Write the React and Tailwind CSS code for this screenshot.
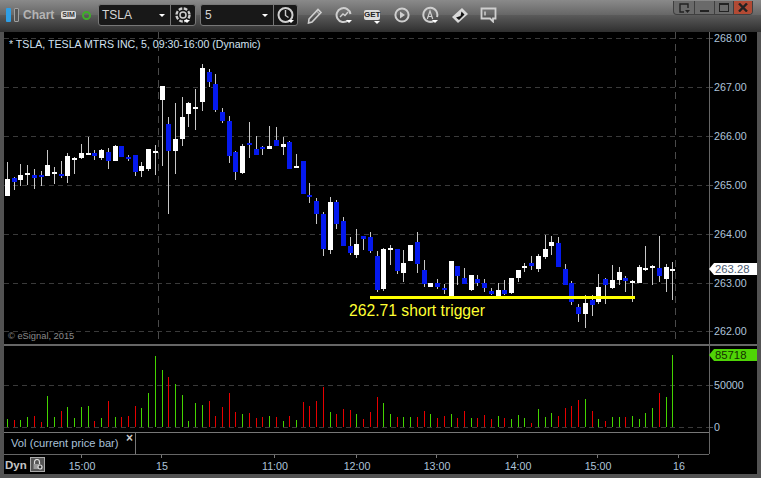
import React from 'react';

// [wickTop, wickBottom, bodyTop, bodyBottom, isBlue]
const candles = [
  [162, 196, 179, 196, 0], [177, 190, 178, 182, 1], [164, 186, 175, 180, 0], [165, 185, 173, 175, 0],
  [169, 189, 175, 178, 1], [171, 186, 175, 177, 1], [150, 176, 165, 176, 0], [167, 184, 172, 174, 0],
  [161, 178, 174, 176, 1], [153, 183, 156, 176, 0], [157, 174, 158, 160, 0], [144, 159, 153, 158, 0],
  [137, 155, 153, 155, 0], [150, 160, 153, 156, 1], [149, 160, 150, 158, 0], [148, 169, 152, 161, 1],
  [145, 161, 146, 161, 0], [146, 157, 146, 157, 1], [155, 161, 157, 159, 1], [155, 176, 155, 172, 1],
  [162, 177, 166, 171, 0], [149, 171, 149, 169, 0], [145, 175, 151, 153, 0], [86, 166, 86, 100, 0],
  [117, 214, 124, 151, 1], [103, 174, 139, 151, 0], [97, 146, 117, 139, 0], [102, 127, 103, 114, 0],
  [89, 130, 107, 109, 0], [64, 111, 68, 102, 0], [69, 87, 72, 82, 1], [74, 112, 84, 110, 1],
  [108, 123, 112, 121, 1], [116, 163, 121, 156, 1], [151, 180, 152, 172, 1], [144, 174, 146, 173, 0],
  [122, 158, 143, 145, 1], [136, 155, 149, 155, 1], [146, 155, 147, 149, 1], [126, 149, 146, 149, 0],
  [127, 146, 140, 146, 1], [137, 155, 144, 147, 0], [141, 169, 142, 169, 1], [154, 168, 166, 168, 0],
  [161, 194, 161, 194, 1], [183, 203, 195, 197, 1], [198, 224, 201, 214, 1], [212, 256, 214, 249, 1],
  [197, 254, 202, 250, 0], [200, 229, 202, 224, 1], [217, 246, 221, 246, 1], [237, 255, 246, 253, 1],
  [229, 258, 244, 255, 0], [236, 250, 236, 239, 1], [232, 253, 237, 251, 1], [251, 292, 256, 290, 1],
  [248, 291, 249, 289, 0], [245, 265, 248, 250, 0], [249, 274, 249, 271, 1], [250, 282, 263, 273, 0],
  [245, 261, 245, 261, 0], [232, 273, 242, 264, 1], [260, 287, 270, 284, 1], [283, 287, 283, 287, 0],
  [279, 289, 283, 287, 1], [284, 294, 288, 290, 1], [261, 298, 261, 297, 0], [266, 285, 266, 276, 1],
  [268, 284, 278, 284, 1], [275, 291, 275, 290, 0], [275, 286, 279, 283, 1], [279, 292, 283, 288, 1],
  [288, 295, 291, 294, 1], [283, 297, 290, 296, 0], [280, 295, 290, 294, 1], [278, 294, 278, 293, 0],
  [270, 282, 270, 278, 0], [263, 272, 266, 268, 0], [256, 270, 263, 266, 1], [254, 272, 256, 269, 0],
  [235, 259, 249, 257, 0], [236, 255, 242, 246, 0], [237, 267, 243, 267, 1], [264, 285, 269, 285, 1],
  [281, 305, 283, 302, 1], [304, 322, 307, 314, 1], [295, 328, 303, 314, 0], [295, 316, 300, 305, 1],
  [274, 304, 287, 302, 0], [278, 304, 279, 285, 1], [265, 289, 280, 288, 0], [267, 285, 272, 280, 0],
  [276, 292, 278, 281, 1], [280, 302, 281, 283, 0], [265, 283, 267, 283, 0], [246, 271, 268, 270, 0],
  [265, 285, 266, 268, 0], [236, 282, 268, 276, 1], [264, 292, 267, 279, 0], [262, 300, 269, 271, 0],
];

// volume bar tops in screen px, g = up, r = down
const volumes = [
  [419, 'g'], [420, 'r'], [420, 'g'], [417, 'g'], [416, 'r'], [422, 'r'], [396, 'g'], [417, 'g'], [411, 'r'], [407, 'g'],
  [418, 'g'], [407, 'g'], [406, 'g'], [421, 'r'], [418, 'g'], [401, 'r'], [417, 'g'], [417, 'r'], [416, 'r'], [406, 'r'],
  [408, 'g'], [393, 'g'], [356, 'g'], [370, 'g'], [377, 'r'], [384, 'g'], [395, 'g'], [421, 'g'], [403, 'g'], [405, 'g'],
  [401, 'r'], [416, 'r'], [407, 'r'], [393, 'r'], [412, 'r'], [414, 'g'], [413, 'r'], [418, 'r'], [417, 'r'], [416, 'g'],
  [417, 'r'], [421, 'g'], [416, 'r'], [420, 'g'], [402, 'r'], [406, 'r'], [401, 'r'], [387, 'r'], [412, 'g'], [414, 'r'],
  [409, 'r'], [410, 'r'], [414, 'g'], [419, 'r'], [412, 'r'], [397, 'r'], [403, 'g'], [414, 'g'], [417, 'r'], [417, 'g'],
  [417, 'g'], [417, 'r'], [411, 'r'], [414, 'g'], [418, 'r'], [416, 'r'], [414, 'g'], [418, 'r'], [411, 'r'], [418, 'g'],
  [418, 'r'], [415, 'r'], [419, 'r'], [416, 'g'], [418, 'r'], [419, 'g'], [415, 'g'], [418, 'g'], [423, 'r'], [409, 'g'],
  [417, 'g'], [413, 'g'], [416, 'r'], [408, 'r'], [406, 'r'], [400, 'r'], [399, 'g'], [411, 'r'], [419, 'g'], [421, 'r'],
  [417, 'g'], [417, 'g'], [417, 'r'], [416, 'g'], [419, 'g'], [413, 'g'], [408, 'g'], [393, 'r'], [397, 'g'], [355, 'g'],
];

const barX = (i) => Math.round(7 + i * 6.72);

const priceTicks = [
  [38, '268.00'], [87, '267.00'], [136, '266.00'], [185, '265.00'], [234, '264.00'], [283, '263.00'], [331, '262.00'],
];
const timeTicks = [
  [82, '15:00'], [162, '15'], [275, '11:00'], [357, '12:00'], [437, '13:00'], [518, '14:00'], [598, '15:00'], [679, '16'],
];

const tickText = 'fill-[#aec4da] text-[10.7px]';

const PricePlot = () => (
  <svg viewBox="4 32 705 312" width="705" height="312" className="block shrink-0">
    {priceTicks.map(([y]) => (
      <line key={y} x1="4" x2="709" y1={y + 0.5} y2={y + 0.5} stroke="#3a3a3a" strokeDasharray="5 4" />
    ))}
    <line x1="158.5" x2="158.5" y1="32" y2="344" stroke="#4a4a4a" strokeDasharray="7 5" />
    <line x1="675.5" x2="675.5" y1="32" y2="344" stroke="#4a4a4a" strokeDasharray="7 5" />
    {candles.map(([wt, wb, bt, bb, blue], i) => (
      <g key={i}>
        <rect x={barX(i)} y={wt} width="1" height={wb - wt} fill="#c8c8c8" />
        <rect x={barX(i) - 2} y={bt} width="5" height={bb - bt} fill={blue ? '#0519ee' : '#ffffff'} />
      </g>
    ))}
    <rect x="370" y="296" width="265" height="3" fill="#ffff00" />
    <text x="349" y="316" className="fill-[#ffff33] text-[15.7px]">262.71 short trigger</text>
    <text x="8" y="339" className="fill-[#8a8a8a] text-[9.3px]">© eSignal, 2015</text>
  </svg>
);

const VolumePlot = () => (
  <svg viewBox="4 346 705 86" width="705" height="86" className="block shrink-0">
    <line x1="4" x2="709" y1="385.5" y2="385.5" stroke="#3a3a3a" strokeDasharray="5 4" />
    <line x1="4" x2="709" y1="427.5" y2="427.5" stroke="#3a3a3a" strokeDasharray="5 4" />
    {volumes.map(([top, c], i) => (
      <rect key={i} x={barX(i)} y={top} width="1" height={427 - top} fill={c === 'g' ? '#44d400' : '#e60000'} />
    ))}
  </svg>
);

const IconGlow = ({ children, w = 18, h = 18 }) => (
  <svg width={w} height={h} viewBox={`0 0 ${w} ${h}`} fill="none" stroke="#cfcfcf" strokeWidth="2" className="shrink-0">
    {children}
  </svg>
);

const Caret = ({ x, y }) => <path d={`M${x} ${y}h6l-3 3z`} fill="#fff" stroke="none" />;

const Toolbar = () => (
  <div className="h-8 shrink-0 relative flex items-center pl-[6px] pb-[2px] bg-[linear-gradient(#8a8a8a_0%,#666666_47%,#5a5a5a_48%,#2f2f2f_100%)]">
    <div className="flex gap-[3px] mr-1">
      <div className="w-[5px] h-[14px] rounded-[1px] bg-[#2f9fe6]" />
      <div className="w-[5px] h-[14px] rounded-[1px] border border-[#a0a0a0] bg-[#555]" />
    </div>
    <span className="text-[12px] font-bold text-[#b4b4b4] w-[38px]">Chart</span>
    <span className="w-[15px] h-[8px] rounded-[2px] bg-[#d8d8d8] text-[7px] leading-[8px] font-bold text-[#333] text-center">SIM</span>
    <span className="ml-[6px] w-[9px] h-[9px] rounded-full border-2 border-[#3fae2a]" />

    <div className="ml-[7px] w-[98px] h-[22px] flex items-center rounded-[3px] border border-[#777] bg-[#181818]">
      <span className="text-[12px] text-[#d5d5d5] pl-[3px] w-[56px]">TSLA</span>
      <span className="w-0 h-0 ml-[4px] border-x-[3px] border-x-transparent border-t-[3px] border-t-white" />
      <span className="h-full ml-[5px] border-l border-[#777]" />
      <div className="flex-1 flex justify-center">
        <IconGlow w={18} h={18}>
          <circle cx="9" cy="9" r="3" strokeWidth="1.5" />
          <circle cx="9" cy="9" r="6.5" strokeWidth="2.4" strokeDasharray="3.6 1.5" />
          <Caret x="10" y="14" />
        </IconGlow>
      </div>
    </div>

    <div className="ml-1 w-[98px] h-[22px] flex items-center rounded-[3px] border border-[#777] bg-[#181818]">
      <span className="text-[12px] text-[#d5d5d5] pl-[4px] w-[61px]">5</span>
      <span className="w-0 h-0 border-x-[3px] border-x-transparent border-t-[3px] border-t-white" />
      <span className="h-full ml-[5px] border-l border-[#777]" />
      <div className="flex-1 flex justify-center">
        <IconGlow w={20} h={18}>
          <circle cx="9.5" cy="9" r="7" />
          <path d="M9.5 4v5.5l3 2" strokeWidth="1.4" />
          <Caret x="12" y="14" />
        </IconGlow>
      </div>
    </div>

    <div className="ml-[9px] flex items-center">
      <div className="w-[28px]">
        <IconGlow w={16} h={17}>
          <path d="M2 12 11 2.5l3 3L5 15l-3.5 1z" strokeWidth="1.6" />
          <path d="M9.5 4l3 3" strokeWidth="1" />
        </IconGlow>
      </div>
      <div className="w-[29px]">
        <IconGlow w={18} h={18}>
          <path d="M13 14.5A7 7 0 1 1 15.5 8" />
          <path d="M5 11l3-3 2 1.5L13 6" strokeWidth="1.4" />
          <Caret x="11" y="14" />
        </IconGlow>
      </div>
      <div className="w-[30px] relative">
        <div className="w-[16px] h-[10px] rounded-[2px] bg-[#dcdcdc] text-[8px] leading-[10px] font-bold text-[#222] text-center">GET</div>
        <span className="absolute left-[10px] top-[11px] w-0 h-0 border-x-[3px] border-x-transparent border-t-[3px] border-t-white" />
      </div>
      <div className="w-[28px]">
        <IconGlow w={16} h={16}>
          <circle cx="8" cy="8" r="6.6" />
          <path d="M6 4.5 11 8l-5 3.5z" fill="#cfcfcf" stroke="none" />
        </IconGlow>
      </div>
      <div className="w-[29px]">
        <IconGlow w={17} h={18}>
          <path d="M12 14.8A7 7 0 1 1 15 11" />
          <path d="M5.3 13 8 5l2.7 8M6.3 10.5h3.4" strokeWidth="1.2" />
          <Caret x="10" y="14" />
        </IconGlow>
      </div>
      <div className="w-[29px]">
        <IconGlow w={18} h={17}>
          <path d="M1 10 11 1l6 6L7 16z" fill="#d8d8d8" stroke="none" />
          <path d="M5 10.5 9.5 9l1-4.5 3 3L8 13z" fill="#111" stroke="none" />
        </IconGlow>
      </div>
      <IconGlow w={17} h={16}>
        <path d="M1.5 1.5h14v10h-2.5v3l-3-3H1.5z" strokeWidth="1.8" />
        <path d="M5 4.5v4" strokeWidth="1" stroke="#fff" />
      </IconGlow>
    </div>

    <div className="absolute right-2 top-[1px] w-[80px] h-[14px] flex rounded-b-[4px] overflow-hidden border border-t-0 border-[#3f3f3f] bg-[#6a6a6a]">
      <div className="w-[21px] border-r border-[#3f3f3f] flex items-center justify-center">
        <svg width="11" height="10" fill="none" stroke="#222" strokeWidth="1.4"><path d="M5 9H1V1h8v4" /><path d="M6 7h5l-2.5 3z" fill="#222" stroke="none" /></svg>
      </div>
      <div className="w-[20px] border-r border-[#3f3f3f] flex items-end justify-center pb-[2px]">
        <div className="w-[9px] h-[2px] bg-[#222]" />
      </div>
      <div className="w-[19px] border-r border-[#3f3f3f] flex items-center justify-center">
        <div className="w-[10px] h-[9px] border border-t-2 border-[#222]" />
      </div>
      <div className="flex-1 flex items-center justify-center bg-[#b24a34]">
        <svg width="10" height="9" stroke="#222" strokeWidth="2.4"><path d="M1 0.5 9 8.5M9 0.5 1 8.5" /></svg>
      </div>
    </div>
  </div>
);

const ValueBadge = ({ top, bg, text, color }) => (
  <div className={`absolute -left-[1px] ${top} flex items-center h-[12px]`}>
    <span className={`w-0 h-0 border-y-[6px] border-y-transparent border-r-[5px] ${bg[0]}`} />
    <span className={`w-[43px] h-[12px] pl-[1px] text-[11.3px] leading-[12px] ${bg[1]} ${color}`}>{text}</span>
  </div>
);

const PriceAxis = () => (
  <div className="relative flex-1 h-[312px] border-l border-[#666]">
    <svg viewBox="710 32 47 312" width="47" height="312" className="block">
      {priceTicks.map(([y, label]) => (
        <g key={y}>
          <line x1="710" x2="713" y1={y + 0.5} y2={y + 0.5} stroke="#555" />
          <text x="714" y={y + 4} className={tickText}>{label}</text>
        </g>
      ))}
    </svg>
    <ValueBadge top="top-[231px]" bg={['border-r-white', 'bg-white']} text="263.28" color="text-[#4a5a70]" />
  </div>
);

const VolumeAxis = () => (
  <div className="relative flex-1 h-[86px] border-l border-[#666]">
    <svg viewBox="710 346 47 86" width="47" height="86" className="block">
      <line x1="710" x2="713" y1="385.5" y2="385.5" stroke="#555" />
      <text x="714" y="389" className={tickText}>50000</text>
      <line x1="710" x2="713" y1="427.5" y2="427.5" stroke="#555" />
      <text x="714" y="431" className={tickText}>0</text>
    </svg>
    <ValueBadge top="top-[3px]" bg={['border-r-[#4fd406]', 'bg-[#4fd406]']} text="85718" color="text-[#143000]" />
  </div>
);

const TimeAxis = () => (
  <div className="flex-1 flex">
    <div className="relative w-[705px] border-t border-[#666]">
      <div className="absolute left-[1px] top-[2px] flex items-center">
        <span className="w-[25px] text-[11.5px] font-bold text-[#c4c4c4] leading-[14px]">Dyn</span>
        <div className="w-[15px] h-[15px] flex items-center justify-center border border-[#aaa] bg-[#555]">
          <svg width="11" height="11" fill="none" stroke="#ddd" strokeWidth="1.2">
            <path d="M2.5 5V3a2.5 2.5 0 0 1 5 0v2" />
            <rect x="1.5" y="5" width="6" height="5" fill="#999" stroke="none" />
            <circle cx="8" cy="8" r="2" fill="#333" />
          </svg>
        </div>
      </div>
      <svg viewBox="4 455 705 19" width="705" height="19" className="block">
        {timeTicks.map(([x, label]) => (
          <g key={x}>
            <line x1={x - 0.5} x2={x - 0.5} y1="455" y2="458" stroke="#777" />
            <text x={x} y="470" textAnchor="middle" className={tickText}>{label}</text>
          </g>
        ))}
      </svg>
    </div>
  </div>
);

export default function App() {
  return (
    <div className="w-[761px] h-[478px] flex flex-col bg-[#525252] overflow-hidden font-['Liberation_Sans',Arial,sans-serif]">
      <Toolbar />
      <div className="flex-1 mx-1 mb-1 flex flex-col bg-black">
        <div className="relative flex">
          <PricePlot />
          <PriceAxis />
          <span className="absolute left-[5px] top-[5px] text-[10.6px] leading-[14px] text-[#d3e3f2]">
            * TSLA, TESLA MTRS INC, 5, 09:30-16:00 (Dynamic)
          </span>
        </div>
        <div className="h-[2px] bg-[#666]" />
        <div className="flex">
          <VolumePlot />
          <VolumeAxis />
        </div>
        <div className="h-[22px] flex">
          <div className="w-[705px] flex border-t border-[#777]">
            <div className="w-[132px] relative border-r border-[#777] pl-[7px] pt-[3px] text-[11.2px] leading-[14px] text-[#a9c0d8]">
              Vol (current price bar)
              <span className="absolute left-[122px] top-0 text-[12px] leading-[10px] font-bold text-[#ccc]">×</span>
            </div>
          </div>
          <div className="flex-1 border-l border-[#666]" />
        </div>
        <TimeAxis />
      </div>
    </div>
  );
}
